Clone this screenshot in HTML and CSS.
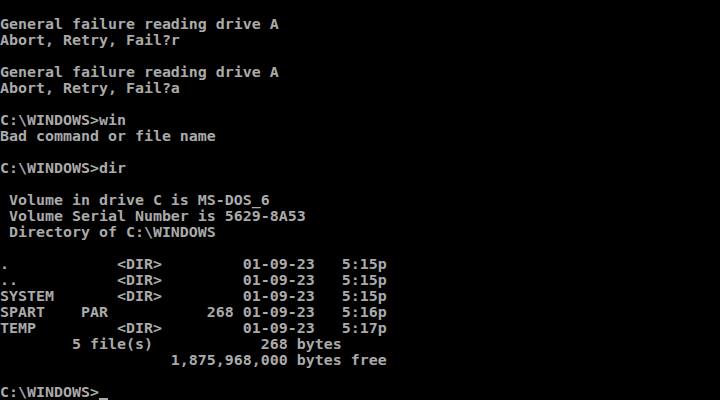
FILE: index.html
```html
<!DOCTYPE html>
<html lang="en">
<head>
  <meta charset="UTF-8">
  <meta name="viewport" content="width=device-width, initial-scale=1.0">
  <title>MS-DOS</title>
  <link rel="stylesheet" href="styles.css">
</head>
<body>
  <pre class="screen">

General failure reading drive A
Abort, Retry, Fail?r

General failure reading drive A
Abort, Retry, Fail?a

C:\WINDOWS&gt;win
Bad command or file name

C:\WINDOWS&gt;dir

 Volume in drive C is MS-DOS_6
 Volume Serial Number is 5629-8A53
 Directory of C:\WINDOWS

.            &lt;DIR&gt;         01-09-23   5:15p
..           &lt;DIR&gt;         01-09-23   5:15p
SYSTEM       &lt;DIR&gt;         01-09-23   5:15p
SPART    PAR           268 01-09-23   5:16p
TEMP         &lt;DIR&gt;         01-09-23   5:17p
        5 file(s)            268 bytes
                   1,875,968,000 bytes free

C:\WINDOWS&gt;<span class="cursor"> </span></pre>
</body>
</html>
```

FILE: styles.css
```css
html, body {
  margin: 0;
  padding: 0;
  background: #000;
}
body {
  width: 720px;
  height: 400px;
  overflow: hidden;
}
.screen {
  margin: 0;
  font-family: "DejaVu Sans Mono", "Liberation Mono", monospace;
  font-size: 14.95px;
  font-weight: bold;
  line-height: 16px;
  color: #aaaaaa;
  white-space: pre;
}
.cursor {
  display: inline-block;
  width: 9px;
  height: 16px;
  vertical-align: top;
  box-sizing: border-box;
  border-bottom: 2px solid #aaaaaa;
}
```
